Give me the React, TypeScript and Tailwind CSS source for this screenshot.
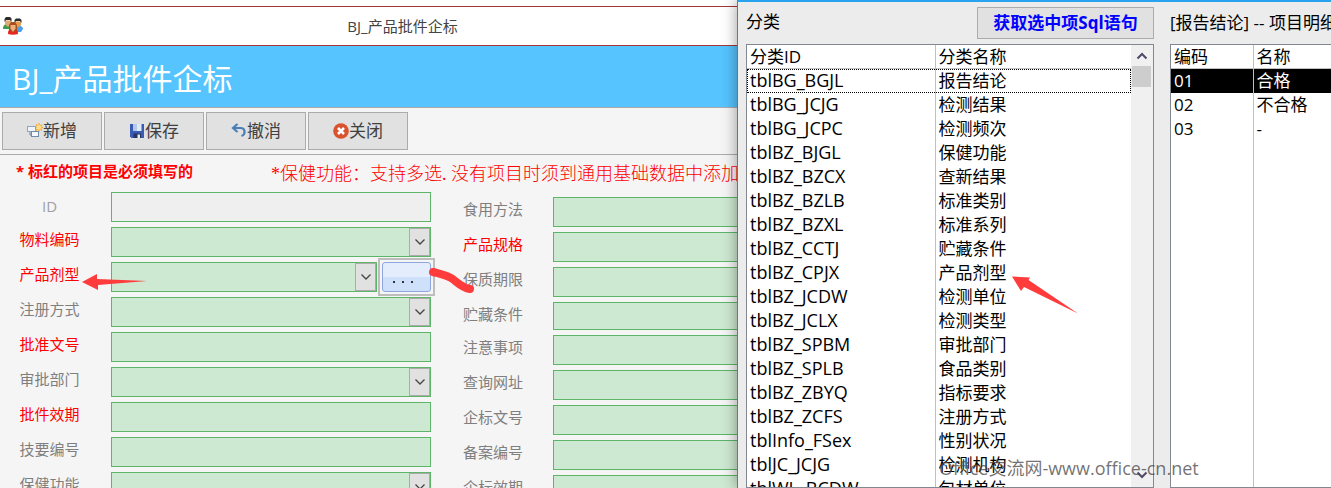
import React from "react";

type Field = { id: string; label: string; required?: boolean; kind?: "text" | "combo" | "picker"; readOnly?: boolean; short?: boolean };

const leftFields: Field[] = [
  { id: "id", label: "ID", readOnly: true },
  { id: "material", label: "物料编码", required: true, kind: "combo" },
  { id: "dosage", label: "产品剂型", required: true, kind: "picker" },
  { id: "register", label: "注册方式", kind: "combo" },
  { id: "approval", label: "批准文号", required: true },
  { id: "dept", label: "审批部门", kind: "combo" },
  { id: "expiry", label: "批件效期", required: true },
  { id: "tech", label: "技要编号" },
  { id: "function", label: "保健功能", kind: "combo" },
];

const rightFields: Field[] = [
  { id: "usage", label: "食用方法" },
  { id: "spec", label: "产品规格", required: true },
  { id: "shelf", label: "保质期限" },
  { id: "storage", label: "贮藏条件", short: true },
  { id: "notice", label: "注意事项" },
  { id: "url", label: "查询网址" },
  { id: "standard", label: "企标文号" },
  { id: "record", label: "备案编号" },
  { id: "stdexpiry", label: "企标效期" },
];

const categories: [string, string][] = [
  ["tblBG_BGJL", "报告结论"],
  ["tblBG_JCJG", "检测结果"],
  ["tblBG_JCPC", "检测频次"],
  ["tblBZ_BJGL", "保健功能"],
  ["tblBZ_BZCX", "查新结果"],
  ["tblBZ_BZLB", "标准类别"],
  ["tblBZ_BZXL", "标准系列"],
  ["tblBZ_CCTJ", "贮藏条件"],
  ["tblBZ_CPJX", "产品剂型"],
  ["tblBZ_JCDW", "检测单位"],
  ["tblBZ_JCLX", "检测类型"],
  ["tblBZ_SPBM", "审批部门"],
  ["tblBZ_SPLB", "食品类别"],
  ["tblBZ_ZBYQ", "指标要求"],
  ["tblBZ_ZCFS", "注册方式"],
  ["tblInfo_FSex", "性别状况"],
  ["tblJC_JCJG", "检测机构"],
  ["tblWL_BCDW", "包材单位"],
];

const items: [string, string][] = [
  ["01", "合格"],
  ["02", "不合格"],
  ["03", "-"],
];

function PeopleIcon() {
  return (
    <svg width="22" height="20" viewBox="0 0 22 20" aria-hidden="true">
      <path d="M1 13c0-4 2-5 5-5s5 2 5 5z" fill="#3f9a4c" />
      <path d="M12 13c0-3 2-4 4-4s5 2 5 4l-2 3h-6z" fill="#4a9fe8" />
      <path d="M3 4.500h6V8l-2 2.500H5L3 8z" fill="#e2a873" />
      <path d="M2.500 6V3L4 1h4l1.500 1.500V6L8 4H4z" fill="#2f2a26" />
      <path d="M13 5.500h6V9l-2 2h-2l-2-2z" fill="#e59a4e" />
      <path d="M12.500 7V4L14 2.500h4L19.500 4v3L18 5h-4z" fill="#2c2c30" />
      <path d="M6 18c0-4 1-5 5-5s5 1 5 5c-3 1-7 1-10 0z" fill="#e32a1c" />
      <path d="M7 14V9l2-3h4l2 3v5l-4 2z" fill="#a4511f" />
      <path d="M8.500 9h5v3.500L11 16l-2.500-3.500z" fill="#eeb07a" />
    </svg>
  );
}

function NewIcon() {
  return (
    <svg width="16" height="16" viewBox="0 0 16 16" aria-hidden="true">
      <path d="M12 0v9M7.500 4.500h9M9 1.500l6 6M15 1.500l-6 6" stroke="#f2ac3c" strokeWidth="1.300" />
      <circle cx="12" cy="4.500" r="2.200" fill="#ffe08a" />
      <rect x=".5" y="3.500" width="8" height="5" fill="#eef4fa" stroke="#8fa6bf" />
      <path d="M3 9v3h1" fill="none" stroke="#6d87a5" />
      <rect x="4.500" y="8.500" width="7" height="5" fill="#f6fafe" stroke="#6f8cac" />
    </svg>
  );
}

function SaveIcon() {
  return (
    <svg width="16" height="16" viewBox="0 0 16 16" aria-hidden="true">
      <path d="M1 1h14v14H2.500L1 13.500z" fill="#3c5cb4" />
      <path d="M4 1h8.500v7H4z" fill="#dfe9f8" />
      <path d="M4 1h4v7H4z" fill="#b4c8ea" />
      <path d="M4.500 10.500h7.500V15H4.500z" fill="#26345f" />
      <path d="M8.500 11.500H11V15H8.500z" fill="#e8edf5" />
    </svg>
  );
}

function UndoIcon() {
  return (
    <svg width="16" height="16" viewBox="0 0 16 16" aria-hidden="true">
      <path d="M3 5h6.500c5 0 5.500 6.500 1 8" fill="none" stroke="#4a7fb8" strokeWidth="2.200" />
      <path d="M6.500 1L2 5l4.500 4" fill="none" stroke="#4a7fb8" strokeWidth="2.200" />
    </svg>
  );
}

function CloseIcon() {
  return (
    <svg width="16" height="16" viewBox="0 0 16 16" aria-hidden="true">
      <circle cx="8" cy="8" r="7.800" fill="#d9532f" />
      <path d="M5 5l6 6M11 5l-6 6" stroke="#fff" strokeWidth="2.600" />
    </svg>
  );
}

function Chevron({ up = false }: { up?: boolean }) {
  return (
    <svg width="12" height="8" viewBox="0 0 12 8" fill="none" aria-hidden="true">
      <path d={up ? "M1.500 6.500L6 2l4.500 4.500" : "M1.500 1.500L6 6l4.500-4.500"} stroke={up ? "#51496a" : "#444"} strokeWidth={up ? 2 : 1.300} />
    </svg>
  );
}

function Combo({ id }: { id: string }) {
  return (
    <div className="relative flex-1">
      <select id={id} className="block h-[30px] w-full appearance-none border border-[#5cb569] bg-[#cee9d1] px-2 text-[15px]">
        <option value=""></option>
      </select>
      <span className="pointer-events-none absolute inset-y-px right-px flex w-[21px] items-center justify-center border border-[#ababab] bg-[#e1e1e1]">
        <Chevron />
      </span>
    </div>
  );
}

function FieldRow({ field, right = false }: { field: Field; right?: boolean }) {
  return (
    <div className="flex">
      <label
        htmlFor={field.id}
        className={`shrink-0 text-[15px] leading-6 ${right ? "w-[122px] pl-8" : "w-[111px] pr-3 text-center"} ${field.required ? "text-[#ff0000]" : field.readOnly ? "pt-0.5 text-[#a0a0a0]" : "text-[#7f7f7f]"}`}
      >
        {field.label}
      </label>
      {field.kind === "combo" || field.kind === "picker" ? (
        <Combo id={field.id} />
      ) : (
        <input
          id={field.id}
          type="text"
          readOnly={field.readOnly}
          className={`min-w-0 flex-1 border border-[#5cb569] px-2 text-[15px] ${field.short ? "h-[28px]" : "h-[30px]"} ${right ? "border-r-0" : ""} ${field.readOnly ? "bg-[#efefef]" : "bg-[#cee9d1]"}`}
        />
      )}
      {field.kind === "picker" && (
        <div className="-my-1 -mr-1 ml-px border-2 border-[#bdbdbd] p-0.5">
          <button
            type="button"
            aria-label="选择产品剂型"
            className="flex h-[30px] w-[49px] items-end justify-center rounded-[3px] border border-[#8fa5e0] bg-linear-to-b from-[#e4edfc] from-50% to-[#cfe0fb] to-50% pr-2 pb-2"
          >
            <span className="flex gap-[7px]">
              <i className="size-0.5 bg-[#333]" />
              <i className="size-0.5 bg-[#333]" />
              <i className="size-0.5 bg-[#333]" />
            </span>
          </button>
        </div>
      )}
    </div>
  );
}

function ToolButton({ icon, label }: { icon: React.ReactNode; label: string }) {
  return (
    <button type="button" className="flex h-[38px] w-[100px] items-center justify-center border border-[#ababab] bg-[#e1e1e1] text-[17px] text-[#404040]">
      {icon}
      {label}
    </button>
  );
}

function ProductForm() {
  return (
    <section className="min-w-0 overflow-hidden bg-[#f5f5f5]">
      <div className="h-1.5 bg-white" />
      <header className="flex h-10 items-center border-y border-[#a4373a] bg-white pl-0.5">
        <PeopleIcon />
        <span className="ml-11 flex-1 text-center text-[15px] text-[#444]">BJ_产品批件企标</span>
      </header>
      <h1 className="flex h-[62px] items-center border-b border-[#ababab] bg-[#55c4ff] pt-1 pl-3 text-[30px] text-white">BJ_产品批件企标</h1>
      <nav className="flex h-[47px] items-center gap-0.5 border-b border-[#ababab] px-0.5">
        <ToolButton icon={<NewIcon />} label="新增" />
        <ToolButton icon={<SaveIcon />} label="保存" />
        <ToolButton icon={<UndoIcon />} label="撤消" />
        <ToolButton icon={<CloseIcon />} label="关闭" />
      </nav>
      <div className="flex h-[37px] items-center whitespace-nowrap text-[#ff0000]">
        <p className="w-[271px] shrink-0 pb-1 pl-4 text-[15px] font-bold">* 标红的项目是必须填写的</p>
        <p className="pt-0.5 font-['Liberation_Serif','Noto_Sans_CJK_SC',serif] text-[18px] font-light">*保健功能：支持多选. 没有项目时须到通用基础数据中添加</p>
      </div>
      <form className="flex items-start">
        <div className="flex w-[431px] shrink-0 flex-col gap-[5px]">
          {leftFields.map((f) => (
            <FieldRow key={f.id} field={f} />
          ))}
        </div>
        <div className="flex min-w-0 flex-1 flex-col gap-[5px] pt-[5px]">
          {rightFields.map((f) => (
            <FieldRow key={f.id} field={f} right />
          ))}
        </div>
      </form>
    </section>
  );
}

function CategoryDialog() {
  return (
    <section className="relative z-10 flex min-w-0 gap-4 overflow-hidden border-t-2 border-l border-t-[#27a3f0] border-l-[#1890d6] bg-[#ececec] pl-2 text-[17px] text-black shadow-[0_0_14px_rgba(0,0,0,0.4)]">
      <div className="flex w-[408px] shrink-0 flex-col">
        <div className="flex h-[42px] shrink-0 items-start justify-between pt-[5px]">
          <h2 className="leading-[30px]">分类</h2>
          <button type="button" className="h-8 w-[177px] border border-[#ababab] bg-[#e1e1e1] font-bold text-[#0000ff]">
            获取选中项Sql语句
          </button>
        </div>
        <div className="flex min-h-0 flex-1 border border-[#828790] bg-white">
          <div className="min-w-0 flex-1 overflow-hidden">
            <table className="w-full table-fixed border-collapse text-left leading-[23px]">
              <thead>
                <tr className="h-[23px] border-b border-[#c0c0c0]">
                  <th className="w-[188px] border-r border-[#c0c0c0] px-[3px] py-0 font-normal">分类ID</th>
                  <th className="px-[3px] py-0 font-normal">分类名称</th>
                </tr>
              </thead>
              <tbody>
                {categories.map(([code, name], i) => (
                  <tr key={code} className={i === 0 ? "h-6 outline-1 -outline-offset-1 outline-dotted outline-black" : "h-6"}>
                    <td className="border-r border-[#c0c0c0] px-[3px] py-0 text-[18px]">{code}</td>
                    <td className="px-[3px] py-0">{name}</td>
                  </tr>
                ))}
              </tbody>
            </table>
          </div>
          <div className="flex w-[22px] flex-col items-center bg-[#f0f0f0]">
            <div className="flex h-[21px] shrink-0 items-center">
              <Chevron up />
            </div>
            <div className="mr-0.5 h-[21px] w-[19px] bg-[#cdcdcd]" />
            <div className="mt-auto mb-2 rotate-180">
              <Chevron up />
            </div>
          </div>
        </div>
      </div>
      <div className="flex w-[300px] shrink-0 flex-col">
        <h2 className="h-[42px] shrink-0 pt-[5px] leading-[32px]">[报告结论] -- 项目明细</h2>
        <div className="min-h-0 flex-1 overflow-hidden border border-[#828790] bg-white">
          <table className="h-full w-full table-fixed border-collapse text-left leading-[23px]">
            <thead>
              <tr className="h-[23px] border-b border-[#c0c0c0]">
                <th className="w-[82px] border-r border-[#c0c0c0] px-[3px] py-0 font-normal">编码</th>
                <th className="px-[3px] py-0 font-normal">名称</th>
              </tr>
            </thead>
            <tbody>
              {items.map(([code, name], i) => (
                <tr key={code} className={i === 0 ? "h-6 bg-black text-white" : "h-6"}>
                  <td className="border-r border-[#c0c0c0] px-[3px] py-0">{code}</td>
                  <td className="px-[3px] py-0">{name}</td>
                </tr>
              ))}
              <tr aria-hidden="true">
                <td className="border-r border-[#c0c0c0]" />
                <td />
              </tr>
            </tbody>
          </table>
        </div>
      </div>
      <p className="pointer-events-none absolute bottom-2 left-[201px] text-[18px] leading-6 whitespace-nowrap text-[#444]/75">Office交流网-www.office-cn.net</p>
      <svg className="pointer-events-none absolute top-[272px] left-[273px]" width="70" height="44" viewBox="0 0 70 44" aria-hidden="true">
        <path d="M1 2.500L19 3.500L17.500 6L67 39.500L13 13L10 17Z" fill="#ff3b3b" />
      </svg>
    </section>
  );
}

export default function App() {
  return (
    <main className="relative grid h-screen grid-cols-[737fr_594fr] overflow-hidden font-['Open_Sans','Noto_Sans_CJK_SC',sans-serif]">
      <ProductForm />
      <CategoryDialog />
      <svg className="pointer-events-none absolute top-[270px] left-[80px]" width="70" height="24" viewBox="0 0 70 24" aria-hidden="true">
        <path d="M2 12L17 4V9L67 11L18 15V20Z" fill="#ff3b3b" />
      </svg>
      <svg className="pointer-events-none absolute top-[264px] left-[426px]" width="52" height="32" viewBox="0 0 52 32" aria-hidden="true">
        <path d="M7 8C15 10 22 11 28 16C33 20 37 24 44 25" fill="none" stroke="#ff3b3b" strokeWidth="8" strokeLinecap="round" />
      </svg>
    </main>
  );
}
